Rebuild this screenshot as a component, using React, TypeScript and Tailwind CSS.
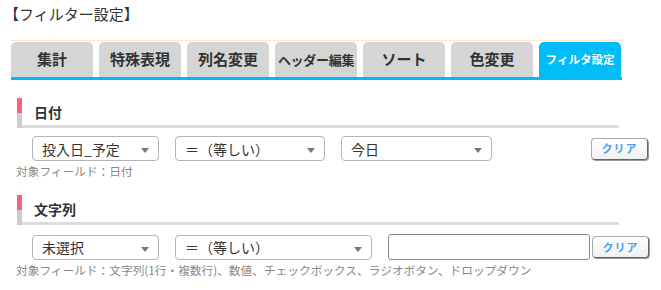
const font = { fontFamily: '"Noto Sans CJK JP", "Noto Sans", sans-serif' };

const tabs = ['集計', '特殊表現', '列名変更', 'ヘッダー編集', 'ソート', '色変更', 'フィルタ設定'];

function Arrow() {
  return (
    <svg width="8" height="5" viewBox="0 0 8 5" className="mt-[4px]">
      <polygon points="0,0 8,0 4,5" fill="#777" />
    </svg>
  );
}

function SelectBox({ label, width }: { label: string; width: string }) {
  return (
    <div
      className={`${width} h-[25px] flex items-center justify-between pl-[9px] pr-[9px] border border-[#b5b5b5] rounded-[4px] bg-white text-[14px] text-[#333] leading-none`}
    >
      <span>{label}</span>
      <Arrow />
    </div>
  );
}

function ClearButton() {
  return (
    <div className="w-[57px] h-[22px] flex items-center justify-center rounded-[4px] border border-[#aaa] border-r-[#666] border-b-[#666] bg-gradient-to-b from-white to-[#f0f0f0] text-[11px] font-bold text-[#4aa2f0] tracking-[1px] shadow-[1px_1px_0_#999]">
      クリア
    </div>
  );
}

function SectionHeader({ title }: { title: string }) {
  return (
    <div className="ml-[17px] flex h-[30px] w-[602px]">
      <div className="w-[5px] flex flex-col">
        <div className="h-[15px] bg-[#f4627c]" />
        <div className="h-[15px] bg-[#cdcdcd]" />
      </div>
      <div className="flex-1 border-b-[3px] border-[#dcdcdc] pl-[12px] pt-[3px] text-[14px] font-bold text-[#333] leading-[22px]">
        {title}
      </div>
    </div>
  );
}

export default function App() {
  return (
    <div className="w-[661px] h-[290px] bg-white overflow-hidden" style={font}>
      <div className="pl-[4px] pt-[4px] text-[15px] leading-[20px] text-[#333]">【フィルター設定】</div>

      {/* tab bar */}
      <div className="mt-[16px] ml-[11px] w-[611px]">
        <div className="border-t border-[#fde6cc] pt-[1px] flex gap-[6px]">
          {tabs.map((t, i) => {
            const active = i === tabs.length - 1;
            const small = t.length > 5;
            return (
              <div
                key={t}
                className={`w-[82px] h-[35px] rounded-t-[5px] flex items-center justify-center font-bold whitespace-nowrap ${
                  active
                    ? 'bg-[#00bdf7] text-white text-[11.5px]'
                    : small
                      ? 'bg-[#d5d5d5] text-[#333] text-[13px] tracking-[-0.3px]'
                      : 'bg-[#d5d5d5] text-[#333] text-[15px]'
                }`}
              >
                {t}
              </div>
            );
          })}
        </div>
        <div className="h-[3px] bg-[#00bdf7]" />
      </div>

      {/* 日付 */}
      <div className="mt-[18px]">
        <SectionHeader title="日付" />
        <div className="mt-[8px] ml-[32px] flex items-center">
          <SelectBox label="投入日_予定" width="w-[127px]" />
          <div className="ml-[16px]">
            <SelectBox label="＝（等しい）" width="w-[150px]" />
          </div>
          <div className="ml-[16px]">
            <SelectBox label="今日" width="w-[151px]" />
          </div>
          <div className="ml-[99px]">
            <ClearButton />
          </div>
        </div>
        <div className="ml-[16px] mt-[3px] text-[11.7px] leading-[14px] text-[#888]">対象フィールド：日付</div>
      </div>

      {/* 文字列 */}
      <div className="mt-[17px]">
        <SectionHeader title="文字列" />
        <div className="mt-[9px] ml-[32px] flex items-center">
          <SelectBox label="未選択" width="w-[127px]" />
          <div className="ml-[16px]">
            <SelectBox label="＝（等しい）" width="w-[197px]" />
          </div>
          <div className="ml-[16px] w-[202px] h-[26px] border border-[#8a8a8a] rounded-[3px] bg-white" />
          <div className="ml-[2px]">
            <ClearButton />
          </div>
        </div>
        <div className="ml-[16px] mt-[3px] text-[11.7px] leading-[14px] text-[#888] whitespace-nowrap">
          対象フィールド：文字列(1行・複数行)、数値、チェックボックス、ラジオボタン、ドロップダウン
        </div>
      </div>
    </div>
  );
}
